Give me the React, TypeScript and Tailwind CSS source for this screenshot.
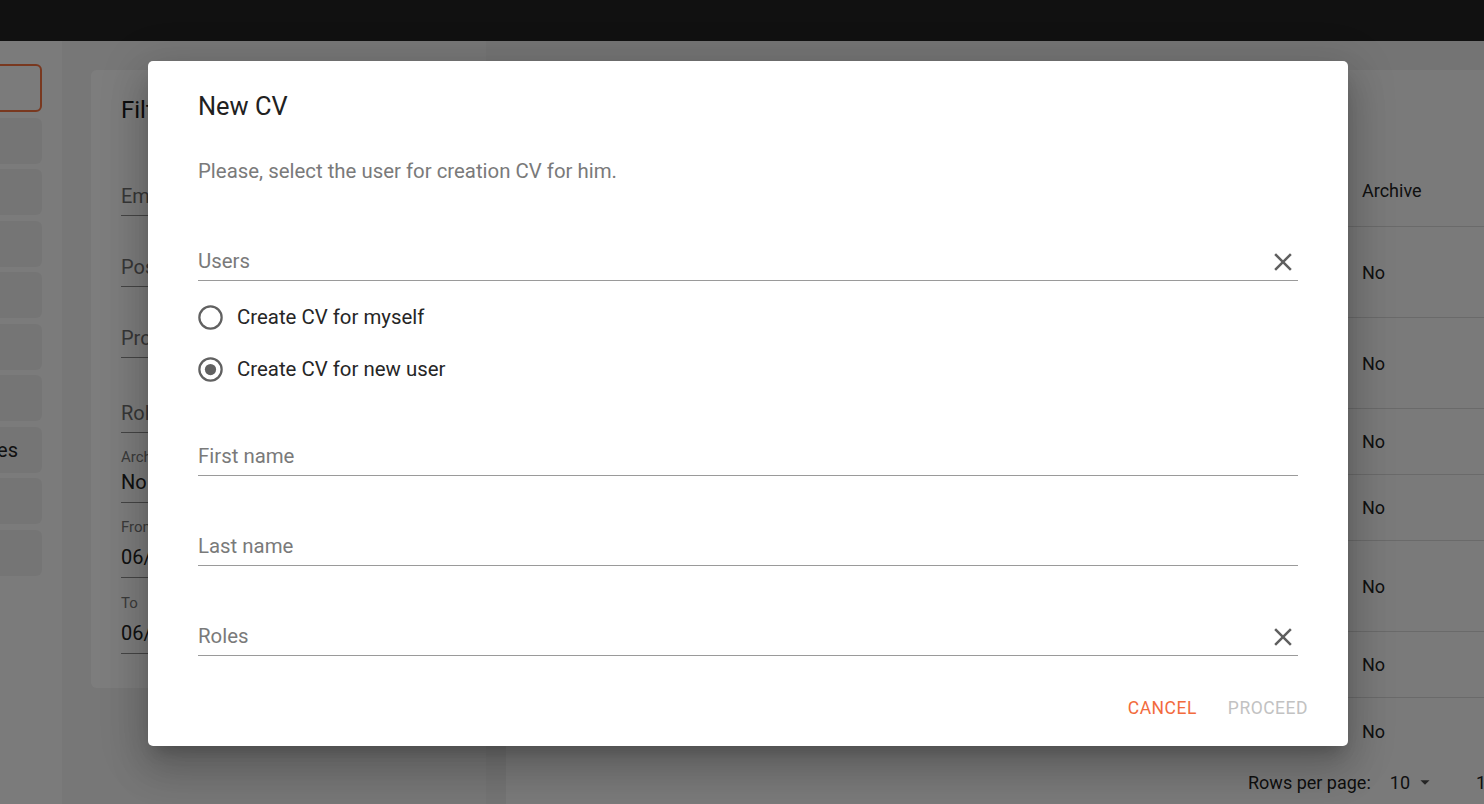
import React from "react";

function ClearIcon() {
  return (
    <svg width="30" height="30" viewBox="0 0 24 24" className="shrink-0">
      <path
        fill="#5f5f5f"
        d="M19 6.41L17.59 5 12 10.59 6.41 5 5 6.41 10.59 12 5 17.59 6.41 19 12 13.41 17.59 19 19 17.59 13.41 12z"
      />
    </svg>
  );
}

function RadioIcon({ checked }: { checked?: boolean }) {
  return (
    <svg width="27" height="27" viewBox="0 0 24 24" className="shrink-0">
      <circle cx="12" cy="12" r="9.9" fill="none" stroke="#616161" strokeWidth="2" />
      {checked && <circle cx="12" cy="12" r="5" fill="#616161" />}
    </svg>
  );
}

function DialogField({ label, clear, className = "" }: { label: string; clear?: boolean; className?: string }) {
  return (
    <div className={`flex h-[33px] items-start border-b border-[#9a9a9a] ${className}`}>
      <span className="flex-1 text-[20.4px] leading-[27px] text-[#7a7a7a]">{label}</span>
      {clear && (
        <span className="-mt-[1px] flex h-[30px] w-[30px] items-center justify-center">
          <ClearIcon />
        </span>
      )}
    </div>
  );
}

function RadioRow({ label, checked }: { label: string; checked?: boolean }) {
  return (
    <div className="flex h-[52px] items-center">
      <span className="-ml-[1px] flex w-[27px] items-center justify-center">
        <RadioIcon checked={checked} />
      </span>
      <span className="ml-[13px] text-[20.4px] leading-[27px] text-[#262626]">{label}</span>
    </div>
  );
}

function FilterField({ label, className = "" }: { label: string; className?: string }) {
  return (
    <div className={`h-[33px] border-b border-[#8a8a8a] ${className}`}>
      <span className="block text-[20px] leading-[27px] text-[#6f6f6f]">{label}</span>
    </div>
  );
}

function FilterValue({
  label,
  value,
  gap,
  className = "",
}: {
  label: string;
  value: string;
  gap: string;
  className?: string;
}) {
  return (
    <div className={className}>
      <div className="text-[15px] leading-[18px] text-[#777]">{label}</div>
      <div className={`${gap} border-b border-[#8a8a8a] pb-[6px] text-[20px] leading-[27px] text-[#222]`}>
        {value}
      </div>
    </div>
  );
}

function Sidebar() {
  const items = Array.from({ length: 9 });
  return (
    <div className="w-[62px] shrink-0 overflow-hidden bg-[#f6f6f6] pt-[23px]">
      <div className="-ml-[100px] flex w-[142px] flex-col gap-[5.5px]">
        <div className="h-[48px] rounded-[6px] border-[2.5px] border-[#f2703e]" />
        {items.map((_, i) => (
          <div
            key={i}
            className="flex h-[46px] items-center justify-end rounded-[6px] bg-[#ebebeb] pr-[24px] text-[20px] text-[#222]"
          >
            {i === 6 ? "Employees" : ""}
          </div>
        ))}
      </div>
    </div>
  );
}

function FilterColumn() {
  return (
    <div className="w-[424px] shrink-0 bg-[#efefef] pl-[29px] pt-[29px]">
      <div className="h-[618px] w-[375px] rounded-[6px] bg-[#fbfbfb] px-[30px]">
        <div className="pt-[25px] text-[24px] leading-[30px] text-[#1a1a1a]">Filters</div>
        <FilterField label="Email" className="mt-[57.5px]" />
        <FilterField label="Position" className="mt-[38px]" />
        <FilterField label="Projects" className="mt-[38px]" />
        <FilterField label="Roles" className="mt-[42px]" />
        <FilterValue label="Archive" value="No" gap="mt-[2.5px]" className="mt-[15.5px]" />
        <FilterValue label="From" value="06/01/2023" gap="mt-[8px]" className="mt-[15.5px]" />
        <FilterValue label="To" value="06/30/2023" gap="mt-[8px]" className="mt-[15.5px]" />
      </div>
    </div>
  );
}

function TableArea() {
  const rows = [91, 91, 66, 66, 91, 66, 66];
  return (
    <div className="min-w-0 flex-1 bg-[#e9e9e9] pl-[20px] pt-[29px]">
      <div className="flex h-full flex-col rounded-tl-[6px] bg-[#f5f5f5]">
        <div className="h-[85px] shrink-0" />
        <div className="flex h-[72px] shrink-0 items-center border-b border-[#d4d4d4]">
          <div className="flex-1" />
          <div className="w-[122px] text-[18px] text-[#222]">Archive</div>
        </div>
        {rows.map((h, i) => (
          <div
            key={i}
            style={{ height: h }}
            className={`flex shrink-0 items-center ${i < rows.length - 1 ? "border-b border-[#d4d4d4]" : ""}`}
          >
            <div className="flex-1" />
            <div className="w-[122px] text-[18px] text-[#222]">No</div>
          </div>
        ))}
        <div className="flex h-[36px] shrink-0 items-center whitespace-nowrap pl-[742px] text-[18px] text-[#1e1e1e]">
          <span>Rows per page:</span>
          <span className="ml-[19px]">10</span>
          <svg width="22" height="22" viewBox="0 0 24 24" className="ml-[4px] shrink-0">
            <path d="M7 10l5 5 5-5z" fill="#4a4a4a" />
          </svg>
          <span className="ml-[40px]">1-10 of 50</span>
        </div>
      </div>
    </div>
  );
}

function NewCvDialog() {
  return (
    <div className="absolute left-[148px] top-[61px] w-[1200px] rounded-[5px] bg-white shadow-[0_11px_15px_-7px_rgba(0,0,0,0.2),0_24px_38px_3px_rgba(0,0,0,0.14),0_9px_46px_8px_rgba(0,0,0,0.12)]">
      <div className="px-[50px] pt-[29px]">
        <h2 className="text-[25.4px] font-normal leading-[32px] text-[#212121]">New CV</h2>
        <p className="mt-[35.5px] text-[20.4px] leading-[27px] text-[#7a7a7a]">
          Please, select the user for creation CV for him.
        </p>
        <DialogField label="Users" clear className="mt-[63px]" />
        <div className="mt-[10.5px]">
          <RadioRow label="Create CV for myself" />
          <RadioRow label="Create CV for new user" checked />
        </div>
        <DialogField label="First name" className="mt-[47.5px]" />
        <DialogField label="Last name" className="mt-[57px]" />
        <DialogField label="Roles" clear className="mt-[57px]" />
      </div>
      <div className="mt-[32.5px] flex justify-end gap-[13px] pb-[18px] pr-[31px]">
        <button className="h-[40px] px-[9px] text-[17.5px] font-normal uppercase tracking-[0.5px] text-[#f26b3d]">
          Cancel
        </button>
        <button className="h-[40px] px-[9px] text-[17.5px] font-normal uppercase tracking-[0.5px] text-[#c2c2c2]">
          Proceed
        </button>
      </div>
    </div>
  );
}

export default function App() {
  return (
    <div className="relative h-[804px] w-[1484px] overflow-hidden font-['Roboto',sans-serif]">
      <div className="flex h-full flex-col bg-[#ececec]">
        <div className="h-[41px] shrink-0 bg-[#222222]" />
        <div className="flex min-h-0 flex-1">
          <Sidebar />
          <FilterColumn />
          <TableArea />
        </div>
      </div>
      <div className="absolute inset-0 bg-black/50" />
      <NewCvDialog />
    </div>
  );
}
